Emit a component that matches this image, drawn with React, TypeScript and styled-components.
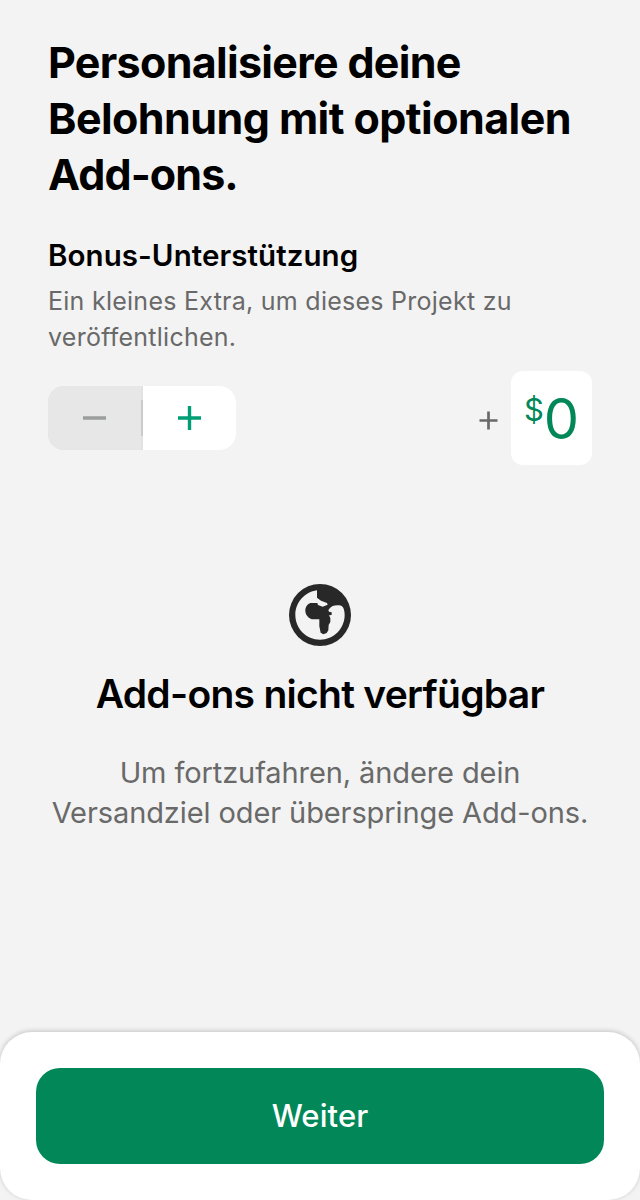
import React from "react";
import styled, { createGlobalStyle } from "styled-components";

const GlobalStyle = createGlobalStyle`
  * { box-sizing: border-box; }
  body { margin: 0; background: #f3f3f3; font-family: Inter, "Liberation Sans", sans-serif; }
  h1, h2, h3, p { margin: 0; }
  button { font-family: inherit; border: 0; padding: 0; }
`;

const Screen = styled.main`
  width: 640px;
  height: 1200px;
  display: flex;
  flex-direction: column;
  background: #f3f3f3;
  overflow: hidden;
`;

const Content = styled.section`
  flex: 1;
  padding: 34px 48px 0;
`;

const Title = styled.h1`
  font-size: 43px;
  line-height: 56px;
  font-weight: 700;
  color: #000;
  white-space: nowrap;
`;

const TitleLine = styled.span<{ $tracking: number }>`
  display: block;
  letter-spacing: ${(p) => p.$tracking}px;
`;

const Subtitle = styled.h2`
  margin-top: 34px;
  font-size: 29.5px;
  line-height: 38px;
  font-weight: 600;
  letter-spacing: 0.07px;
  color: #000;
`;

const Description = styled.p`
  margin-top: 9px;
  font-size: 25px;
  line-height: 36px;
  letter-spacing: 0.26px;
  color: #696969;
  white-space: nowrap;
`;

const BonusRow = styled.div`
  margin-top: 16px;
  height: 94px;
  display: flex;
  align-items: center;
  justify-content: space-between;
`;

const Stepper = styled.div`
  width: 188px;
  height: 64px;
  display: flex;
  align-items: center;
  border-radius: 16px;
  overflow: hidden;
  background: #e2e2e2;
`;

const StepButton = styled.button<{ $disabled?: boolean }>`
  flex: 1;
  height: 100%;
  display: flex;
  align-items: center;
  justify-content: center;
  background: ${(p) => (p.$disabled ? "#e7e7e7" : "#fff")};
  color: ${(p) => (p.$disabled ? "#9b9e9d" : "#009e74")};
`;

const StepDivider = styled.span`
  width: 2px;
  height: 36px;
  background: #cbcbcb;
`;

const Amount = styled.div`
  display: flex;
  align-items: center;
`;

const PlusSign = styled.svg`
  margin: 4px 13px 0 0;
`;

const AmountBox = styled.div`
  width: 81px;
  height: 94px;
  display: flex;
  justify-content: center;
  border-radius: 12px;
  background: #fff;
  color: #028858;
`;

const Currency = styled.span`
  margin-top: 20px;
  font-size: 31px;
  line-height: 38px;
`;

const Value = styled.span`
  margin-top: 13px;
  font-size: 56px;
  line-height: 70px;
`;

const EmptyState = styled.div`
  margin-top: 119px;
  display: flex;
  flex-direction: column;
  align-items: center;
  text-align: center;
`;

const EmptyTitle = styled.h3`
  margin-top: 24px;
  font-size: 39px;
  line-height: 48px;
  font-weight: 600;
  letter-spacing: -0.72px;
  color: #000;
  white-space: nowrap;
`;

const EmptyText = styled.p`
  margin-top: 35px;
  font-size: 29px;
  line-height: 40px;
  letter-spacing: -0.1px;
  color: #696969;
  white-space: nowrap;
`;

const Footer = styled.footer`
  height: 168px;
  padding: 36px;
  border-radius: 32px;
  background: #fff;
  box-shadow: 0 -1px 5px rgba(0, 0, 0, 0.2);
`;

const ContinueButton = styled.button`
  width: 100%;
  height: 96px;
  border-radius: 24px;
  background: #028858;
  color: #fff;
  font-size: 31px;
  line-height: 38px;
  font-weight: 550;
  letter-spacing: 0.1px;
`;

const Globe = () => (
  <svg width="62" height="62" viewBox="27 27 186 186" aria-hidden="true">
    <circle cx="120" cy="120" r="93" fill="#282828" />
    <path
      fill="#f3f3f3"
      d="M111 46C74 51 46 82 46 120c0 41 33 74 74 74s74-33 74-74c0-7-1-13-3-19-2-6-7-10-14-10-13-1-23 2-29 10l-3 5 2 4 8 2v8l-8 1 4 8v12l-5 9-1 16-5 8-10 4-8-5-4-19v-21h-18c-13-1-24-13-24-26 0-12 7-20 15-23h21l2 6 14 5 15-6-2-5-18-7-12-9z"
    />
  </svg>
);

export default function App() {
  return (
    <>
      <GlobalStyle />
      <Screen>
        <Content>
          <Title>
            <TitleLine $tracking={-0.69}>Personalisiere deine</TitleLine>
            <TitleLine $tracking={-0.56}>Belohnung mit optionalen</TitleLine>
            <TitleLine $tracking={-0.9}>Add-ons.</TitleLine>
          </Title>
          <Subtitle>Bonus-Unterstützung</Subtitle>
          <Description>
            Ein kleines Extra, um dieses Projekt zu
            <br />
            veröffentlichen.
          </Description>
          <BonusRow>
            <Stepper>
              <StepButton $disabled aria-label="Weniger">
                <svg width="23" height="24" viewBox="0 0 23 24">
                  <path d="M1 12h21" stroke="currentColor" strokeWidth="3.4" strokeLinecap="square" />
                </svg>
              </StepButton>
              <StepDivider />
              <StepButton aria-label="Mehr">
                <svg width="23" height="24" viewBox="0 0 23 24">
                  <path d="M1.4 12h20.2M11.5 1.4v21.2" stroke="currentColor" strokeWidth="3.4" strokeLinecap="square" />
                </svg>
              </StepButton>
            </Stepper>
            <Amount>
              <PlusSign width="19" height="19" viewBox="0 0 19 19">
                <path d="M.5 9.5h18M9.5 .5v18" stroke="#696969" strokeWidth="2.7" />
              </PlusSign>
              <AmountBox>
                <Currency>$</Currency>
                <Value>0</Value>
              </AmountBox>
            </Amount>
          </BonusRow>
          <EmptyState>
            <Globe />
            <EmptyTitle>Add-ons nicht verfügbar</EmptyTitle>
            <EmptyText>
              Um fortzufahren, ändere dein
              <br />
              Versandziel oder überspringe Add-ons.
            </EmptyText>
          </EmptyState>
        </Content>
        <Footer>
          <ContinueButton>Weiter</ContinueButton>
        </Footer>
      </Screen>
    </>
  );
}
